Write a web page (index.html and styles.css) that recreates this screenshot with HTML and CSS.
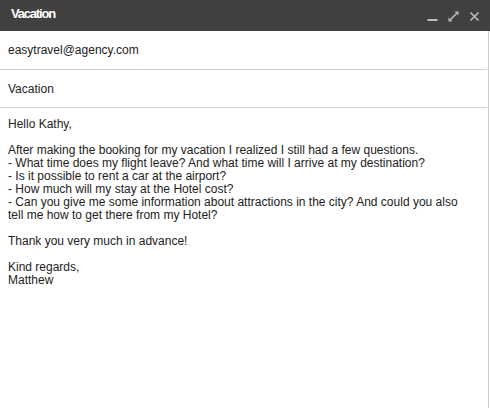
FILE: index.html
```html
<!DOCTYPE html>
<html>
<head>
<meta charset="utf-8">
<link rel="stylesheet" href="styles.css">
</head>
<body>
<div class="compose">
  <div class="titlebar">
    <span class="title">Vacation</span>
    <div class="controls">
      <svg class="icon" width="11" height="11" viewBox="0 0 11 11"><rect x="0.5" y="8" width="10" height="2" fill="#bdbdbd"/></svg>
      <svg class="icon" width="11" height="11" viewBox="0 0 11 11"><path d="M10.5 0.5 L10.5 4.5 L6.5 0.5 Z M0.5 10.5 L0.5 6.5 L4.5 10.5 Z" fill="#bdbdbd"/><path d="M2.5 8.5 L8.5 2.5" stroke="#bdbdbd" stroke-width="1.6"/></svg>
      <svg class="icon" width="11" height="11" viewBox="0 0 11 11"><path d="M1.5 1.5 L9.5 9.5 M9.5 1.5 L1.5 9.5" stroke="#bdbdbd" stroke-width="1.7"/></svg>
    </div>
  </div>
  <div class="main">
    <div class="field field-to">easytravel@agency.com</div>
    <div class="field field-subject">Vacation</div>
    <div class="message">
      <p>Hello Kathy,</p>
      <p>After making the booking for my vacation I realized I still had a few questions.<br>- What time does my flight leave? And what time will I arrive at my destination?<br>- Is it possible to rent a car at the airport?<br>- How much will my stay at the Hotel cost?<br>- Can you give me some information about attractions in the city? And could you also tell me how to get there from my Hotel?</p>
      <p>Thank you very much in advance!</p>
      <p>Kind regards,<br>Matthew</p>
    </div>
  </div>
</div>
</body>
</html>
```

FILE: styles.css
```css
html, body {
  margin: 0;
  padding: 0;
  height: 100%;
  background: #ffffff;
}

.compose {
  display: flex;
  flex-direction: column;
  height: 408px;
  width: 490px;
  font-family: "Liberation Sans", Arial, sans-serif;
  font-size: 12px;
  color: #222222;
}

.titlebar {
  height: 31px;
  background: #404040;
  display: flex;
  align-items: center;
  justify-content: space-between;
  padding: 0 10px 0 11px;
  box-sizing: border-box;
  flex: none;
}

.title {
  color: #ffffff;
  font-weight: bold;
  font-size: 13px;
  letter-spacing: -1.2px;
  margin-top: -4px;
}

.controls {
  display: flex;
  gap: 10px;
  align-items: center;
  margin-top: 1px;
}

.icon {
  display: block;
}

.main {
  flex: 1;
  border-right: 1px solid #cfcfcf;
  margin-right: 1px;
  display: flex;
  flex-direction: column;
}

.field {
  display: flex;
  align-items: center;
  padding: 0 8px;
  border-bottom: 1px solid #cfcfcf;
  margin-right: 1px;
  box-sizing: content-box;
}

.field-to {
  height: 38px;
}

.field-subject {
  height: 37px;
}

.message {
  padding: 10px 20px 0 8px;
  line-height: 13px;
}

.message p {
  margin: 0 0 13px 0;
}
```
